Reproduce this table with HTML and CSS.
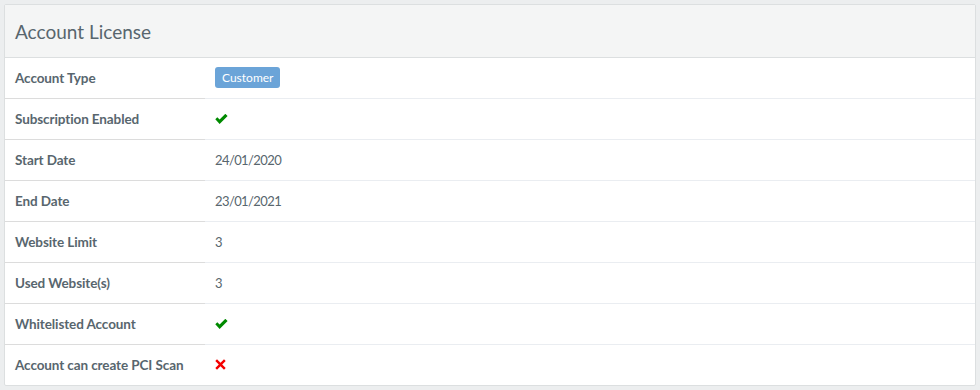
FILE: index.html
```html
<!DOCTYPE html>
<html lang="en">
<head>
    <meta charset="UTF-8">
    <title>Account License</title>
    <link rel="stylesheet" href="styles.css">
</head>
<body>
    <div class="panel">
        <div class="panel-heading">Account License</div>
        <table class="license-table">
            <tr>
                <th>Account Type</th>
                <td><span class="badge">Customer</span></td>
            </tr>
            <tr>
                <th>Subscription Enabled</th>
                <td>
                    <svg class="icon icon-yes" viewBox="0 0 13 10"><path d="M0.3 5.2 L2.3 3.2 L4.6 5.5 L10.3 -0.2 L12.6 2.0 L4.6 10 Z"/></svg>
                </td>
            </tr>
            <tr>
                <th>Start Date</th>
                <td>24/01/2020</td>
            </tr>
            <tr>
                <th>End Date</th>
                <td>23/01/2021</td>
            </tr>
            <tr>
                <th>Website Limit</th>
                <td>3</td>
            </tr>
            <tr>
                <th>Used Website(s)</th>
                <td>3</td>
            </tr>
            <tr>
                <th>Whitelisted Account</th>
                <td>
                    <svg class="icon icon-yes" viewBox="0 0 13 10"><path d="M0.3 5.2 L2.3 3.2 L4.6 5.5 L10.3 -0.2 L12.6 2.0 L4.6 10 Z"/></svg>
                </td>
            </tr>
            <tr>
                <th>Account can create PCI Scan</th>
                <td>
                    <svg class="icon icon-no" viewBox="0 0 11 11"><path d="M2 0.3 L5.5 3.8 L9 0.3 L10.7 2 L7.2 5.5 L10.7 9 L9 10.7 L5.5 7.2 L2 10.7 L0.3 9 L3.8 5.5 L0.3 2 Z"/></svg>
                </td>
            </tr>
        </table>
    </div>
</body>
</html>
```

FILE: styles.css
```css
* {
    margin: 0;
    padding: 0;
    box-sizing: border-box;
}

body {
    font-family: Lato, "Liberation Sans", sans-serif;
    font-size: 13px;
    color: #58666e;
    background: #eceeef;
    padding: 4px;
}

.panel {
    width: 972px;
    background: #fff;
    border: 1px solid #dcdfe0;
    border-radius: 2px;
}

.panel-heading {
    height: 53px;
    padding: 0 10px;
    display: flex;
    align-items: center;
    background: #f4f5f5;
    border-bottom: 1px solid #dcdfe0;
    font-size: 19px;
    color: #58666e;
}

.license-table {
    width: 100%;
    border-collapse: collapse;
}

.license-table tr {
    height: 41px;
}

.license-table tr:first-child {
    height: 40px;
}

.license-table th,
.license-table td {
    padding: 0 10px;
    text-align: left;
    vertical-align: middle;
    border-top: 1px solid #eaedf1;
}

.license-table tr:first-child th,
.license-table tr:first-child td {
    border-top: none;
}

.license-table th {
    width: 200px;
    font-size: 13.5px;
    font-weight: 700;
    letter-spacing: -0.1px;
    border-top-color: #dcdcdc;
}

.license-table td {
    font-size: 13px;
    letter-spacing: -0.6px;
    color: #58666e;
}

.badge {
    display: inline-block;
    padding: 3px 7px;
    font-size: 12px;
    letter-spacing: 0;
    color: #fff;
    background: #6ba4d8;
    border-radius: 3px;
    line-height: 15px;
}

.icon {
    display: block;
}

.icon-yes {
    width: 13px;
    height: 10px;
    fill: #008a00;
}

.icon-no {
    width: 11px;
    height: 11px;
    fill: #f40000;
}
```
